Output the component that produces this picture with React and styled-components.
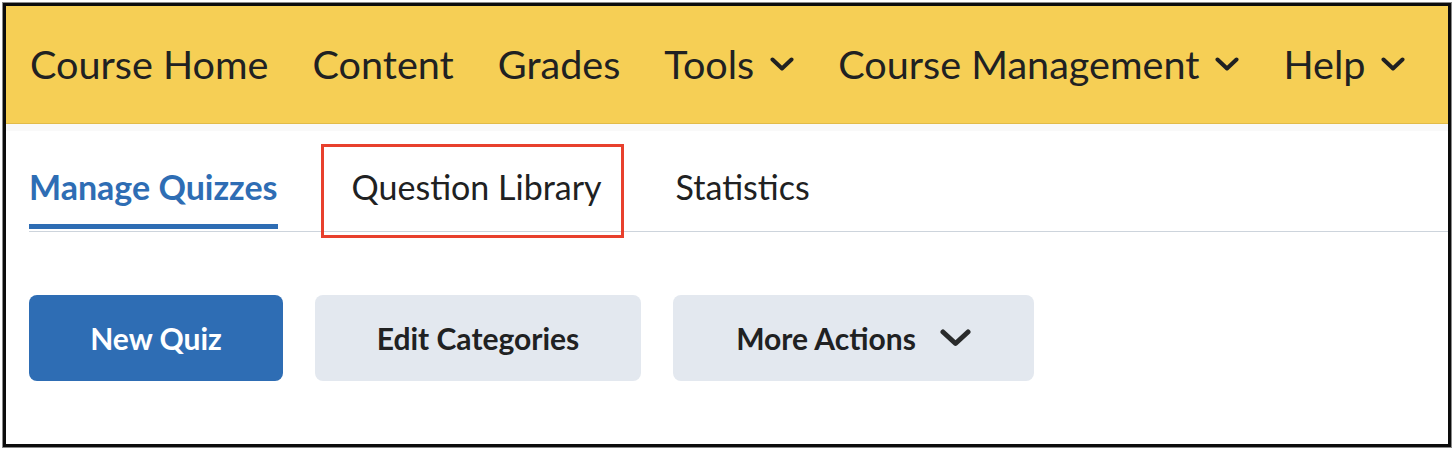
import React from 'react'
import styled, { createGlobalStyle } from 'styled-components'

const Global = createGlobalStyle`
  body {
    margin: 0;
    background: #fff;
    font-family: Lato, "Open Sans", sans-serif;
  }
`

const Frame = styled.div`
  margin: 3px;
  height: 444px;
  box-sizing: border-box;
  border: 3px solid #0c0c0c;
  box-shadow: 0 0 0 1px #8a8a8a;
  overflow: hidden;
  background: #fff;
`

const NavBar = styled.nav`
  height: 118px;
  background: #f6cf55;
  border-bottom: 1px solid #e2bb48;
  display: flex;
  align-items: center;
  gap: 44px;
  padding: 0 0 2px 24px;
  box-sizing: border-box;
`

const NavItem = styled.div`
  display: flex;
  align-items: center;
  gap: 16px;
  font-size: 39.6px;
  color: #202122;
  white-space: nowrap;
`

const Strip = styled.div`
  height: 7px;
  background: #f9f9f9;
`

const Tabs = styled.div`
  display: flex;
  align-items: flex-end;
  margin-left: 23px;
  height: 100px;
  border-bottom: 1px solid #cdd4dc;
`

const Tab = styled.div`
  position: relative;
  font-size: 34px;
  font-weight: ${p => (p.$active ? 700 : 400)};
  color: ${p => (p.$active ? '#2e6db4' : '#202122')};
  padding: 0 0 17px;
  margin: ${p => p.$margin || '0'};
  margin-bottom: 2px;
  border-bottom: 5px solid ${p => (p.$active ? '#2e6db4' : 'transparent')};
  white-space: nowrap;
`

const Highlight = styled.span`
  position: absolute;
  left: -31px;
  right: -22px;
  top: -22px;
  bottom: -14px;
  border: 3px solid #e8402d;
  pointer-events: none;
`

const Actions = styled.div`
  display: flex;
  gap: 32px;
  padding: 63px 0 0 23px;
`

const Button = styled.button`
  height: 86px;
  width: ${p => p.$w}px;
  border: none;
  border-radius: 8px;
  background: ${p => (p.$primary ? '#2e6db4' : '#e3e8ef')};
  color: ${p => (p.$primary ? '#fff' : '#202122')};
  font-family: Lato, sans-serif;
  font-size: 30px;
  font-weight: 700;
  display: flex;
  align-items: center;
  justify-content: center;
  gap: 24px;
  padding: 0;
`

const NavChevron = () => (
  <svg width="24" height="14" viewBox="0 0 24 14" fill="none">
    <path d="M2.5 2.5 L12 11.5 L21.5 2.5" stroke="#202122" strokeWidth="4" strokeLinecap="round" strokeLinejoin="round" />
  </svg>
)

const ButtonChevron = () => (
  <svg width="31" height="18" viewBox="0 0 31 18" fill="none">
    <path d="M3 3 L15.5 14.5 L28 3" stroke="#2a2b2c" strokeWidth="5" strokeLinecap="round" strokeLinejoin="round" />
  </svg>
)

const App = () => {
  return (
    <Frame>
      <Global />
      <NavBar>
        <NavItem>Course Home</NavItem>
        <NavItem>Content</NavItem>
        <NavItem>Grades</NavItem>
        <NavItem>Tools <NavChevron /></NavItem>
        <NavItem>Course Management <NavChevron /></NavItem>
        <NavItem>Help <NavChevron /></NavItem>
      </NavBar>
      <Strip />
      <Tabs>
        <Tab $active>Manage Quizzes</Tab>
        <Tab $margin="0 0 0 74px">
          Question Library
          <Highlight />
        </Tab>
        <Tab $margin="0 0 0 74px">Statistics</Tab>
      </Tabs>
      <Actions>
        <Button $primary $w={254}>New Quiz</Button>
        <Button $w={326}>Edit Categories</Button>
        <Button $w={361}>More Actions <ButtonChevron /></Button>
      </Actions>
    </Frame>
  )
}

export default App
